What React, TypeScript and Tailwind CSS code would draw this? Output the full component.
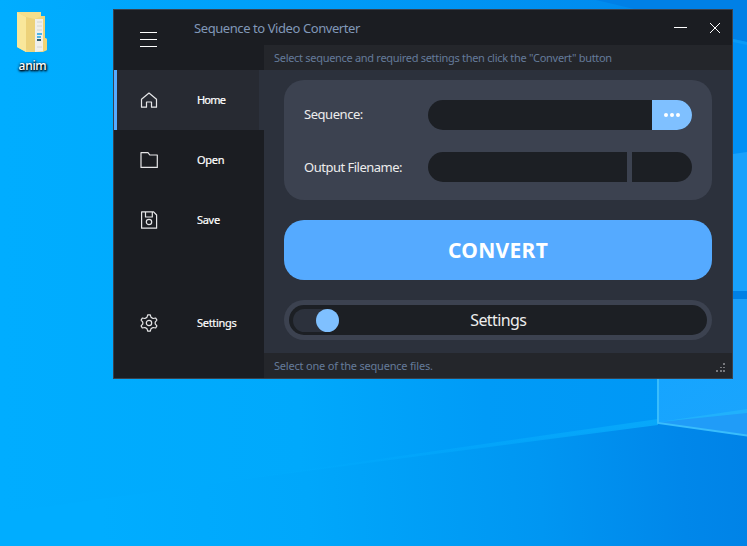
import type { ReactNode } from "react";

function Wallpaper() {
  return (
    <svg className="absolute inset-0 h-full w-full" viewBox="0 0 747 546" preserveAspectRatio="none">
      <defs>
        <linearGradient id="sky" x1="0" y1="0" x2="1" y2="0">
          <stop offset="0" stopColor="#00adff" />
          <stop offset="0.4" stopColor="#00a9fc" />
          <stop offset="0.65" stopColor="#009bf7" />
          <stop offset="1" stopColor="#0096f5" />
        </linearGradient>
        <linearGradient id="top" x1="0" y1="0" x2="1" y2="0">
          <stop offset="0" stopColor="#00adff" />
          <stop offset="0.45" stopColor="#009bf8" />
          <stop offset="1" stopColor="#0084e9" />
        </linearGradient>
        <linearGradient id="ground" gradientUnits="userSpaceOnUse" x1="100" y1="500" x2="747" y2="470">
          <stop offset="0" stopColor="#00adff" />
          <stop offset="0.32" stopColor="#00a7fb" />
          <stop offset="0.68" stopColor="#0096f2" />
          <stop offset="0.9" stopColor="#0087ea" />
          <stop offset="1" stopColor="#0083e7" />
        </linearGradient>
        <linearGradient id="beam" gradientUnits="userSpaceOnUse" x1="200" y1="0" x2="660" y2="0">
          <stop offset="0" stopColor="#00adff" stopOpacity="0" />
          <stop offset="1" stopColor="#08a8fa" />
        </linearGradient>
        <linearGradient id="pane" x1="0" y1="0" x2="1" y2="1">
          <stop offset="0" stopColor="#16a5ff" />
          <stop offset="1" stopColor="#1ba4fc" />
        </linearGradient>
      </defs>
      <rect width="747" height="546" fill="url(#sky)" />
      <rect width="747" height="10" fill="url(#top)" />
      <path d="M596 0L634 9H747V0Z" fill="#0080e6" />
      <path d="M733 9H747V154H733Z" fill="#0090f5" />
      <path d="M733 9H747V42L733 39Z" fill="#0080e6" />
      <path d="M733 39L747 42V45L733 42Z" fill="#0a9af7" />
      <path d="M100 499L658 423L747 436V546H0V513Z" fill="url(#ground)" />
      <path d="M100 499L658 419V425L420 456Z" fill="url(#beam)" />
      <path d="M658 378H747V435L658 423Z" fill="url(#pane)" />
      <path d="M658 423L747 410V435Z" fill="#209cf8" />
      <path d="M659 422L747 409V413Z" fill="#21b1fc" />
      <path d="M658 378V423L747 435.5" fill="none" stroke="#39bdfc" strokeWidth="2" />
      <path d="M733 154L747 152V291H733Z" fill="#18a1fc" />
      <path d="M733 291H747V299H733Z" fill="#0080e5" />
      <path d="M733 299H747V380H733Z" fill="#1c9ff9" />
    </svg>
  );
}

function DesktopFolder() {
  return (
    <div className="absolute left-[12px] top-[11px] flex w-10 flex-col items-center">
      <svg width="34" height="43" viewBox="0 0 34 43" className="-ml-px">
        <path d="M2 1H26V5H30V27L32 28V39L28 41H11L2 36Z" fill="#f0d77f" />
        <path d="M20 8H28V40L20 41Z" fill="#efefeb" />
        <path d="M22 11H27M22 15H27M22 19H27M22 36H27" stroke="#d0d4d4" />
        <path d="M22 23H27M22 26H26" stroke="#4db4e8" strokeWidth="2" />
        <path d="M22 29H26" stroke="#315b6b" strokeWidth="2" />
        <path d="M11 6L20 8V41L11 38Z" fill="#edd27a" />
        <path d="M2 1L11 6V41L2 36Z" fill="#f9e79b" />
        <path d="M2 1H26V5L20 8L11 6Z" fill="#f5df8c" />
        <path d="M28 5H30V27L32 28V39L28 40Z" fill="#f0d477" />
      </svg>
      <span className="ml-px mt-[4px] text-[12px] font-medium leading-[16px] tracking-[-0.3px] text-white [text-shadow:1px_1px_2px_#000,0_1px_2px_#00274c,0_1px_3px_#000]">anim</span>
    </div>
  );
}

function Glyph({ children }: { children: ReactNode }) {
  return (
    <svg width="20" height="20" viewBox="0 0 20 20" fill="none" stroke="#e6e6e8" strokeWidth="1.2" strokeLinejoin="round" className="shrink-0">
      {children}
    </svg>
  );
}

function MenuItem({ label, active, children }: { label: string; active?: boolean; children: ReactNode }) {
  return (
    <button className={`flex h-[60px] shrink-0 items-center text-left ${active ? "mr-[5px] border-l-[3px] border-[#55aaff] bg-[#272a32] pl-[22px]" : "pl-[25px]"}`}>
      <Glyph>{children}</Glyph>
      <span className={`ml-[38px] text-[11px] leading-[16px] text-white [-webkit-text-stroke:0.2px_white] ${active ? "tracking-[-0.8px]" : "tracking-[-0.3px]"}`}>{label}</span>
    </button>
  );
}

function Sidebar() {
  return (
    <nav className="flex w-[150px] shrink-0 flex-col bg-[#1b1d22]">
      <div className="mb-[2px] flex h-[58px] items-center pl-[26px]">
        <div className="flex w-[17px] flex-col gap-[6px]">
          <i className="h-px bg-white" />
          <i className="h-px bg-white" />
          <i className="h-px bg-white" />
        </div>
      </div>
      <div className="flex bg-[#2c313c] [&>button]:flex-1">
        <MenuItem label="Home" active>
          <path d="M2.5 9.2L10 3L17.5 9.2V17.2H12.5V12H7.5V17.2H2.5Z" />
        </MenuItem>
      </div>
      <MenuItem label="Open">
        <path d="M2 17.4V2.7H9L10.8 5H18.3V17.4Z" />
      </MenuItem>
      <MenuItem label="Save">
        <path d="M2.6 1.8H14.6L17.6 5V18.2H2.6ZM6.5 1.8V7H13.3V1.8" />
        <circle cx="10" cy="12" r="2.7" />
      </MenuItem>
      <div className="mt-auto mb-[25px] flex flex-col">
        <MenuItem label="Settings">
          <path d="M8.8 1.8H11.2L12.1 4.4L14.1 5.5L16.7 5L17.9 7.1L16.2 9.1V10.9L17.9 12.9L16.7 15L14.1 14.5L12.1 15.6L11.2 18.2H8.8L7.9 15.6L5.9 14.5L3.3 15L2.1 12.9L3.8 10.9V9.1L2.1 7.1L3.3 5L5.9 5.5L7.9 4.4Z" />
          <circle cx="10" cy="10" r="2.7" />
        </MenuItem>
      </div>
    </nav>
  );
}

function FileCard() {
  return (
    <section className="flex h-[120px] flex-col gap-[22px] rounded-[20px] bg-[#3c4250] px-5 pt-5 text-[13px] text-[#ededed]">
      <div className="flex h-[30px] items-center">
        <label className="w-[124px] tracking-[-0.45px]">Sequence:</label>
        <div className="flex h-full flex-1 overflow-hidden rounded-[15px] bg-[#1c1f24]">
          <button className="ml-auto flex w-10 items-center justify-center gap-[2px] bg-[#7fc0ff]">
            <i className="size-1 rounded-full bg-white" />
            <i className="size-1 rounded-full bg-white" />
            <i className="size-1 rounded-full bg-white" />
          </button>
        </div>
      </div>
      <div className="flex h-[30px] items-center">
        <label className="w-[124px] whitespace-nowrap pt-[2px] tracking-[-0.5px]">Output Filename:</label>
        <div className="h-full w-[199px] rounded-l-[15px] bg-[#1c1f24]" />
        <div className="ml-[5px] h-full w-[60px] rounded-r-[15px] bg-[#1c1f24]" />
      </div>
    </section>
  );
}

export default function App() {
  return (
    <div className="relative h-[546px] w-[747px] overflow-hidden font-['Noto_Sans','Open_Sans',sans-serif]">
      <Wallpaper />
      <DesktopFolder />
      <div className="absolute left-[113px] top-[9px] flex h-[370px] w-[620px] flex-col border border-[#3a414d] bg-[#1b1d22]">
        <div className="flex min-h-0 flex-1">
          <Sidebar />
          <div className="flex w-[468px] flex-col">
            <header className="flex h-[35px] shrink-0 items-center bg-[#1b1d22]">
              <h1 className="-ml-[70px] whitespace-nowrap pt-[2px] text-[13px] tracking-[-0.42px] text-[#8198b8]">Sequence to Video Converter</h1>
              <svg width="48" height="12" viewBox="0 0 48 12" className="ml-auto mr-[11px] shrink-0" stroke="#fff" fill="none">
                <path d="M0.5 5.5H13.5" shapeRendering="crispEdges" />
                <path d="M37 1L47 11M47 1L37 11" />
              </svg>
            </header>
            <div className="flex h-[25px] shrink-0 items-center bg-[#24262b] pl-[10px] pt-[2px] text-[11px] tracking-[-0.3px] text-[#657b9a]">
              Select sequence and required settings then click the "Convert" button
            </div>
            <main className="flex flex-1 flex-col bg-[#2c313c] px-5 pt-[10px]">
              <FileCard />
              <button className="mt-5 h-[60px] rounded-[20px] bg-[#55aaff] pt-[2px] text-[21px] font-bold tracking-[0.3px] text-white">CONVERT</button>
              <div className="mt-5 h-10 rounded-[20px] bg-[#3c4250] p-[5px]">
                <div className="flex h-[30px] items-center rounded-[15px] bg-[#1c1f24] pl-[4px] text-[#ededed]">
                  <div className="flex h-[23px] w-[45.5px] items-center justify-end rounded-full bg-[#2c313c]">
                    <i className="size-[23px] rounded-full bg-[#7fc0ff]" />
                  </div>
                  <span className="flex-1 pr-[49px] text-center text-[16px] leading-[20px] tracking-[-0.6px]">Settings</span>
                </div>
              </div>
            </main>
            <footer className="flex h-[25px] shrink-0 items-center justify-between bg-[#24262b] pl-[10px] pr-[7px] text-[11px] tracking-[-0.2px] text-[#657b9a]">
              <span className="pt-[2px]">Select one of the sequence files.</span>
              <svg width="9" height="9" viewBox="0 0 9 9" fill="#77787d" className="mt-[4px]" shapeRendering="crispEdges">
                <path d="M7 0h2v2h-2zM4 4h2v1h-2zM7 4h2v1h-2zM0 7h2v2h-2zM4 7h2v2h-2zM7 7h2v2h-2z" />
              </svg>
            </footer>
          </div>
        </div>
      </div>
    </div>
  );
}
